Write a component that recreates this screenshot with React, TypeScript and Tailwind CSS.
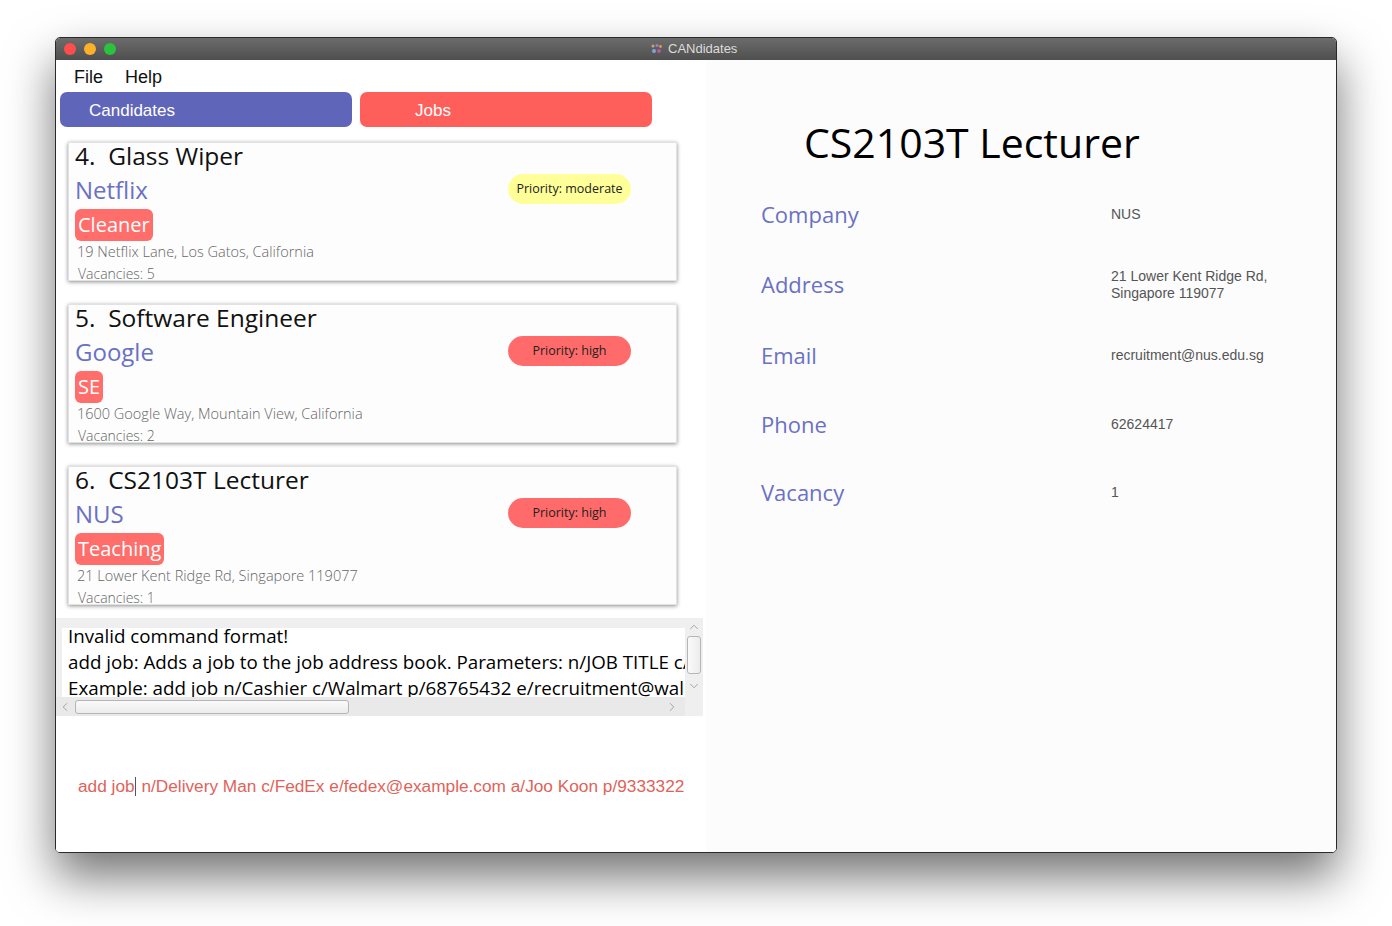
import { ChevronUp, ChevronDown, ChevronLeft, ChevronRight } from 'lucide-react'

const poppins = { fontFamily: '"Open Sans", "Noto Sans", sans-serif' }

type Job = {
  index: number
  title: string
  company: string
  tag: string
  address: string
  vacancies: number
  priority: 'moderate' | 'high'
}

const jobs: Job[] = [
  { index: 4, title: 'Glass Wiper', company: 'Netflix', tag: 'Cleaner', address: '19 Netflix Lane, Los Gatos, California', vacancies: 5, priority: 'moderate' },
  { index: 5, title: 'Software Engineer', company: 'Google', tag: 'SE', address: '1600 Google Way, Mountain View, California', vacancies: 2, priority: 'high' },
  { index: 6, title: 'CS2103T Lecturer', company: 'NUS', tag: 'Teaching', address: '21 Lower Kent Ridge Rd, Singapore 119077', vacancies: 1, priority: 'high' },
]

const details = [
  { label: 'Company', value: ['NUS'], h: 'h-[70px]' },
  { label: 'Address', value: ['21 Lower Kent Ridge Rd,', 'Singapore 119077'], h: 'h-[71px]' },
  { label: 'Email', value: ['recruitment@nus.edu.sg'], h: 'h-[70px]' },
  { label: 'Phone', value: ['62624417'], h: 'h-[68px]' },
  { label: 'Vacancy', value: ['1'], h: 'h-[68px]' },
]

function JobCard({ job }: { job: Job }) {
  return (
    <div className="flex h-[139px] w-[609px] border border-[#e2e2e2] bg-[#fdfdfd] shadow-[0_1px_4px_rgba(0,0,0,0.45)]">
      <div className="flex flex-1 flex-col pl-[6px]" style={poppins}>
        <div className="-mt-[4px] h-[33px] whitespace-pre text-[24.5px] leading-[33px] text-[#111]">
          {job.index}.  {job.title}
        </div>
        <div className="h-[36px] text-[24px] leading-[36px] text-[#6a71c4]">{job.company}</div>
        <div className="mt-[1px] flex">
          <span className="flex h-[32px] items-center rounded-[6px] bg-[#ff6e6a] px-[3px] text-[20px] text-white">
            {job.tag}
          </span>
        </div>
        <div className="h-[22px] pl-[2px] text-[14.5px] font-light leading-[22px] text-[#666]">{job.address}</div>
        <div className="mt-[1px] h-[20px] pl-[3px] text-[14px] font-light leading-[20px] text-[#666]">Vacancies: {job.vacancies}</div>
      </div>
      <div className="mr-[45px] mt-[31px]">
        <div
          className={`flex h-[30px] w-[123px] items-center justify-center rounded-full text-[12.5px] text-[#222] ${
            job.priority === 'high' ? 'bg-[#ff6b6a]' : 'bg-[#ffff99]'
          }`}
          style={poppins}
        >
          Priority: {job.priority}
        </div>
      </div>
    </div>
  )
}

export default function App() {
  return (
    <div className="min-h-[926px] w-[1392px] bg-white pl-[55px] pt-[37px]" style={{ fontFamily: '"Liberation Sans", Arial, sans-serif' }}>
      <div className="flex h-[816px] w-[1282px] flex-col overflow-hidden rounded-[5px] border border-[#2a2a2a] bg-white shadow-[0_24px_48px_rgba(0,0,0,0.55)]">
        {/* title bar */}
        <div className="relative flex h-[22px] shrink-0 items-center bg-gradient-to-b from-[#6c6c6c] to-[#4f4f4f] pl-[8px]">
          <div className="flex gap-[8px]">
            <span className="h-[12px] w-[12px] rounded-full bg-[#fd4e4c]" />
            <span className="h-[12px] w-[12px] rounded-full bg-[#fdb02a]" />
            <span className="h-[12px] w-[12px] rounded-full bg-[#2ac33f]" />
          </div>
          <div className="absolute left-[594px] top-0 flex h-[22px] items-center gap-[5px] text-[13px] text-[#dcdcdc]">
            <svg width="13" height="12" viewBox="0 0 13 12">
              <circle cx="3" cy="3" r="1.5" fill="#c9a66b" />
              <circle cx="7" cy="2.5" r="1.5" fill="#9a7fd1" />
              <circle cx="10.5" cy="3.5" r="1.4" fill="#d6a24e" />
              <circle cx="4" cy="8" r="2" fill="#7fa5d8" />
              <circle cx="9" cy="8" r="2" fill="#b45a9e" />
            </svg>
            CANdidates
          </div>
        </div>

        <div className="flex flex-1">
          {/* left panel */}
          <div className="flex w-[650px] flex-col bg-white">
            <div className="flex h-[32px] items-center gap-[22px] pl-[18px] pt-[2px] text-[18px] text-[#111]">
              <span>File</span>
              <span>Help</span>
            </div>
            <div className="flex h-[35px] gap-[8px] pl-[4px]">
              <div className="flex w-[292px] items-center rounded-[7px] bg-[#5f66b9] pl-[29px] pt-[2px] text-[17px] text-white">Candidates</div>
              <div className="flex w-[292px] items-center rounded-[7px] bg-[#ff5f5b] pl-[55px] pt-[2px] text-[17px] text-white">Jobs</div>
            </div>
            <div className="flex h-[491px] flex-col gap-[23px] pl-[12px] pt-[15px]">
              {jobs.map((job) => (
                <JobCard key={job.index} job={job} />
              ))}
            </div>

            {/* result display */}
            <div className="flex h-[98px] w-[647px] flex-col bg-[#efefef]">
              <div className="flex h-[79px]">
                <div className="ml-[6px] mt-[10px] flex h-[69px] w-[623px] flex-col overflow-hidden whitespace-nowrap bg-white pl-[6px] text-[18.75px] leading-[26px] text-black" style={poppins}>
                  <div className="-mt-[5px]">Invalid command format!</div>
                  <div>add job: Adds a job to the job address book. Parameters: n/JOB TITLE c/COMPANY</div>
                  <div>Example: add job n/Cashier c/Walmart p/68765432 e/recruitment@walmart.com</div>
                </div>
                <div className="flex w-[18px] flex-col items-center">
                  <ChevronUp size={14} strokeWidth={1.5} className="mt-[2px] text-[#999]" />
                  <div className="mt-[2px] h-[38px] w-[14px] rounded-[3px] border border-[#b5b5b5] bg-gradient-to-r from-[#fafafa] to-[#ececec]" />
                  <ChevronDown size={14} strokeWidth={1.5} className="mt-[5px] text-[#999]" />
                </div>
              </div>
              <div className="flex h-[19px] w-[629px] items-center bg-[#e9e9e9]">
                <ChevronLeft size={14} strokeWidth={1.5} className="ml-[2px] text-[#999]" />
                <div className="ml-[3px] h-[14px] w-[274px] rounded-[3px] border border-[#b5b5b5] bg-gradient-to-b from-[#fafafa] to-[#ececec]" />
                <ChevronRight size={14} strokeWidth={1.5} className="ml-auto mr-[6px] text-[#999]" />
              </div>
            </div>

            {/* command box */}
            <div className="flex flex-1 items-start bg-white pl-[22px] pt-[58px]">
              <div className="flex items-center whitespace-pre text-[17.25px] text-[#e0635a]">
                <span>add job</span>
                <span className="mx-[0.5px] inline-block h-[19px] w-[1px] bg-[#555]" />
                <span> n/Delivery Man c/FedEx e/fedex@example.com a/Joo Koon p/9333322</span>
              </div>
            </div>
          </div>

          {/* right panel */}
          <div className="flex flex-1 flex-col bg-[#fcfcfc]">
            <div className="pl-[98px] pt-[58px] text-[41px] leading-[48px] text-black" style={poppins}>
              CS2103T Lecturer
            </div>
            <div className="mt-[13px] flex flex-col pl-[55px]">
              {details.map((d) => (
                <div key={d.label} className={`grid grid-cols-[350px_1fr] items-center ${d.h}`}>
                  <div className="text-[22px] text-[#6a71c4]" style={poppins}>{d.label}</div>
                  <div className="text-[14px] leading-[17px] text-[#555]">
                    {d.value.map((v) => (
                      <div key={v}>{v}</div>
                    ))}
                  </div>
                </div>
              ))}
            </div>
          </div>
        </div>
      </div>
    </div>
  )
}
